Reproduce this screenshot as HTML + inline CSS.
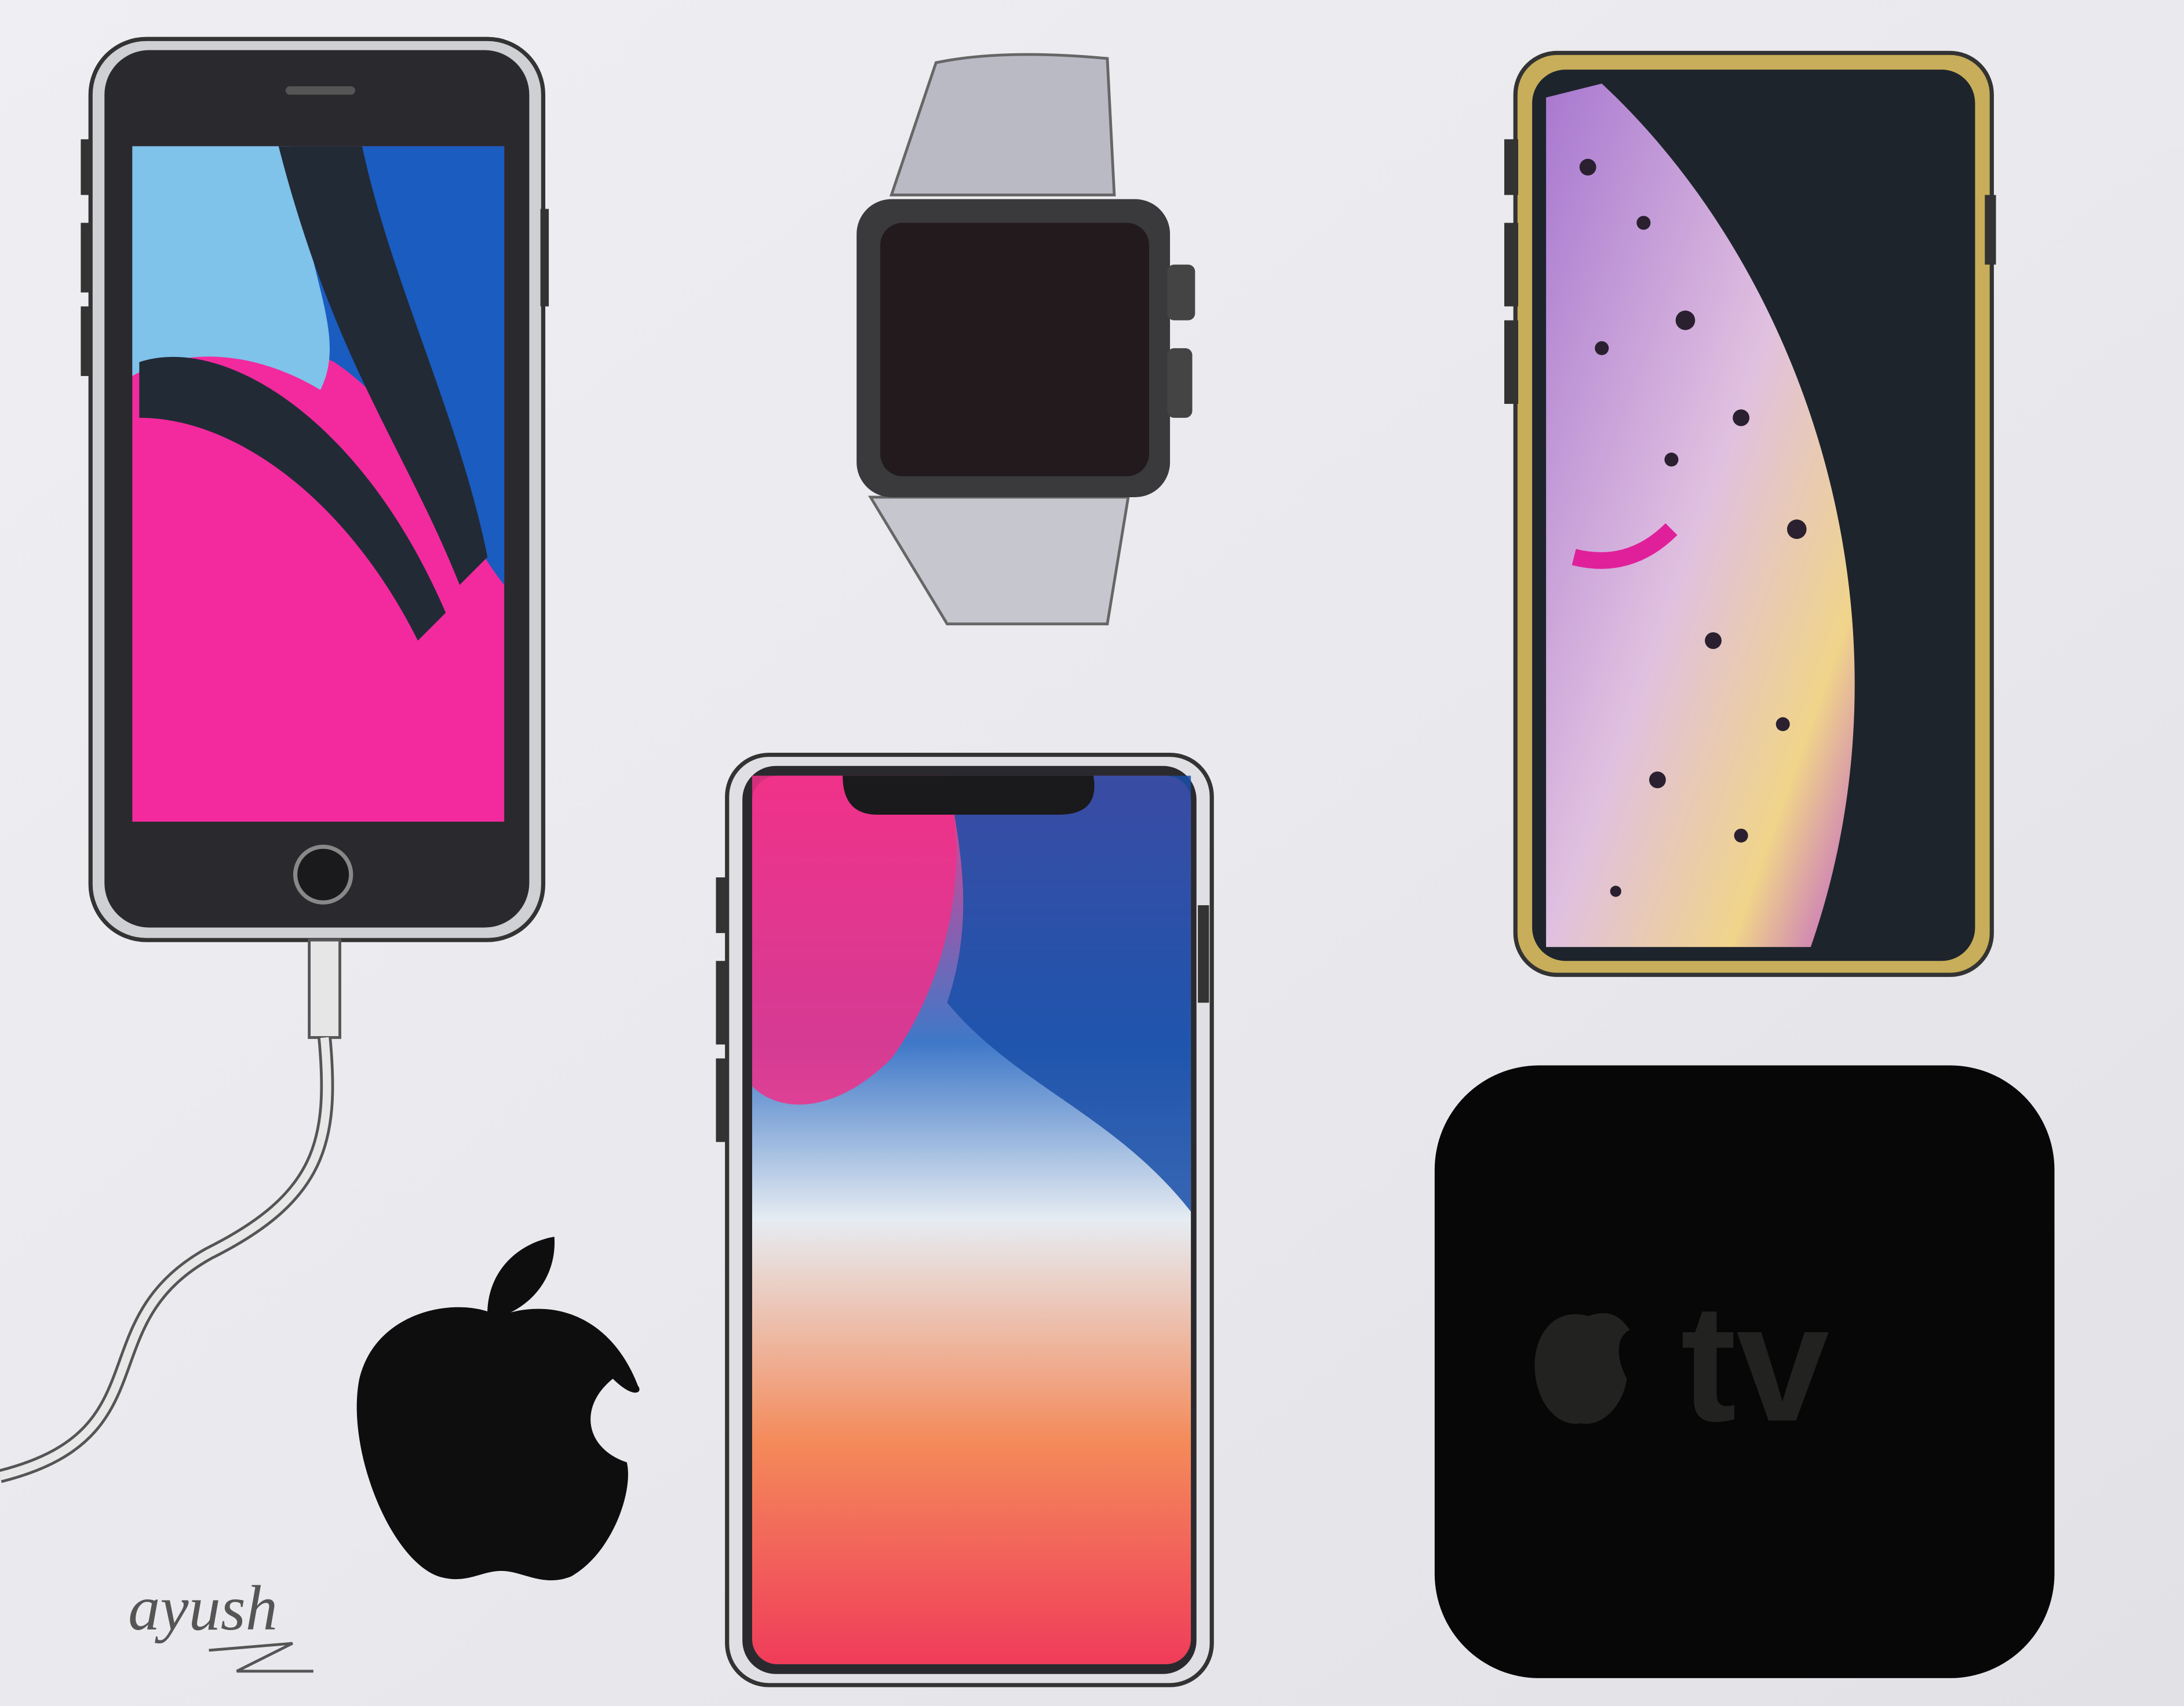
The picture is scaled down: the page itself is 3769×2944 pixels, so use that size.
<!DOCTYPE html>
<html><head><meta charset="utf-8"><style>
html,body{margin:0;padding:0;width:3769px;height:2944px;overflow:hidden;background:#ececf0}
svg{display:block}
</style></head><body>
<svg width="3769" height="2944" viewBox="0 0 1568 1225" preserveAspectRatio="none" xmlns="http://www.w3.org/2000/svg">
<defs>
<linearGradient id="bg" x1="0" y1="0" x2="1" y2="1"><stop offset="0" stop-color="#efeff3"/><stop offset="0.5" stop-color="#eaeaee"/><stop offset="1" stop-color="#e2e2e6"/></linearGradient>
<linearGradient id="s8" x1="0" y1="0" x2="1" y2="1"><stop offset="0" stop-color="#6fb7e6"/><stop offset="0.3" stop-color="#1e2a40"/><stop offset="0.42" stop-color="#1563c8"/><stop offset="0.5" stop-color="#ff2aa2"/><stop offset="1" stop-color="#f2309a"/></linearGradient>
<linearGradient id="sx" x1="0" y1="0" x2="0" y2="1"><stop offset="0" stop-color="#f03c8c"/><stop offset="0.3" stop-color="#3f78c8"/><stop offset="0.5" stop-color="#e6ecf2"/><stop offset="0.75" stop-color="#f48a5a"/><stop offset="1" stop-color="#f03c5a"/></linearGradient>
<linearGradient id="planet" x1="0" y1="0" x2="1" y2="1"><stop offset="0" stop-color="#a878d0"/><stop offset="0.5" stop-color="#e0c0e0"/><stop offset="0.8" stop-color="#f0d48a"/><stop offset="1" stop-color="#c060c8"/></linearGradient>
</defs>
<rect width="1568" height="1225" fill="url(#bg)"/>

<!-- left iPhone 8 -->
<rect x="65" y="28" width="325" height="647" rx="40" fill="#cfd0d4" stroke="#333" stroke-width="3"/>
<rect x="75" y="36" width="305" height="630" rx="32" fill="#2a2a2e"/>
<rect x="95" y="105" width="267" height="485" fill="#f22a9e"/>
<path d="M95 105 L362 105 L362 420 C330 380 300 300 240 260 C180 230 130 230 95 270Z" fill="#1a5cc0"/>
<path d="M95 105 L210 105 C220 200 250 240 230 280 C180 250 130 250 95 270Z" fill="#7fc2ea"/>
<path d="M100 260 C160 240 260 300 320 440 L300 460 C250 360 170 300 100 300Z" fill="#222a36"/>
<path d="M200 105 L260 105 C280 200 330 300 350 400 L330 420 C290 320 240 260 200 105Z" fill="#222a36"/>
<circle cx="232" cy="628" r="20" fill="#1a1a1c" stroke="#888" stroke-width="3"/>
<rect x="205" y="62" width="50" height="6" rx="3" fill="#555"/>
<rect x="58" y="100" width="8" height="40" fill="#333"/><rect x="58" y="160" width="8" height="50" fill="#333"/><rect x="58" y="220" width="8" height="50" fill="#333"/>
<rect x="388" y="150" width="6" height="70" fill="#333"/>

<!-- cable -->
<rect x="222" y="675" width="22" height="70" fill="#e6e6e6" stroke="#555" stroke-width="2"/>
<path d="M233 745 C240 820 230 860 150 900 C60 950 120 1030 0 1060" fill="none" stroke="#555" stroke-width="10"/>
<path d="M233 745 C240 820 230 860 150 900 C60 950 120 1030 0 1060" fill="none" stroke="#e8e8e8" stroke-width="6"/>

<!-- watch -->
<path d="M640 140 L672 45 Q720 35 795 42 L800 140Z" fill="#b9bac4" stroke="#666" stroke-width="2"/>
<path d="M625 357 L810 357 L795 448 L680 448Z" fill="#c6c7ce" stroke="#666" stroke-width="2"/>
<rect x="615" y="143" width="225" height="214" rx="25" fill="#3a3a3c"/>
<rect x="632" y="160" width="193" height="182" rx="16" fill="#221a1c"/>
<rect x="838" y="190" width="20" height="40" rx="5" fill="#444"/><rect x="838" y="250" width="18" height="50" rx="5" fill="#444"/>

<!-- right iPhone XS -->
<rect x="1088" y="38" width="342" height="662" rx="30" fill="#c8ae5a" stroke="#333" stroke-width="3"/>
<rect x="1100" y="50" width="318" height="640" rx="24" fill="#1e242c"/>
<path d="M1110 70 L1150 60 C1300 200 1380 450 1300 680 L1110 680Z" fill="url(#planet)"/>
<g fill="#2a2030">
<circle cx="1140" cy="120" r="6"/><circle cx="1180" cy="160" r="5"/><circle cx="1210" cy="230" r="7"/><circle cx="1150" cy="250" r="5"/><circle cx="1250" cy="300" r="6"/><circle cx="1200" cy="330" r="5"/><circle cx="1290" cy="380" r="7"/><circle cx="1170" cy="400" r="5"/><circle cx="1230" cy="460" r="6"/><circle cx="1280" cy="520" r="5"/><circle cx="1190" cy="560" r="6"/><circle cx="1250" cy="600" r="5"/><circle cx="1160" cy="640" r="4"/>
</g>
<path d="M1130 400 Q1170 410 1200 380" stroke="#e0209a" stroke-width="12" fill="none"/>
<rect x="1080" y="100" width="10" height="40" fill="#333"/><rect x="1080" y="160" width="10" height="60" fill="#333"/><rect x="1080" y="230" width="10" height="60" fill="#333"/>
<rect x="1425" y="140" width="8" height="50" fill="#333"/>

<!-- middle iPhone X -->
<rect x="522" y="542" width="348" height="668" rx="30" fill="#e0e0e4" stroke="#333" stroke-width="3"/>
<rect x="533" y="550" width="326" height="652" rx="24" fill="#2a2a2e"/>
<rect x="540" y="557" width="315" height="638" rx="18" fill="url(#sx)"/>
<path d="M680 557 L855 557 L855 870 C800 800 730 780 680 720 C700 660 690 610 680 557Z" fill="#1a4fa8" opacity="0.85"/>
<path d="M540 557 L680 557 C700 640 670 720 640 760 C600 800 560 800 540 780Z" fill="#f0308a" opacity="0.85"/>
<path d="M605 557 L785 557 Q790 585 760 585 L630 585 Q605 585 605 557Z" fill="#1a1a1c"/>
<rect x="514" y="630" width="8" height="40" fill="#333"/><rect x="514" y="690" width="8" height="60" fill="#333"/><rect x="514" y="760" width="8" height="60" fill="#333"/>
<rect x="860" y="650" width="8" height="70" fill="#333"/>

<!-- apple logo -->
<path d="M358 945 C330 930 270 940 258 990 C248 1040 280 1120 315 1132 C335 1138 345 1128 360 1128 C375 1128 390 1140 410 1132 C440 1115 455 1070 450 1050 C420 1040 415 1010 440 990 C455 1005 462 1000 458 995 C440 948 400 930 358 945Z" fill="#0e0e0e"/>
<path d="M350 948 C348 915 370 893 398 888 C400 918 380 942 350 948Z" fill="#0e0e0e"/>

<!-- apple tv -->
<rect x="1030" y="765" width="445" height="440" rx="75" fill="#070707"/>
<text x="1260" y="1020" font-family="Liberation Sans, sans-serif" font-size="120" font-weight="bold" fill="#222220" text-anchor="middle">tv</text>
<path d="M1140 945 C1115 938 1100 960 1102 985 C1104 1010 1120 1025 1135 1022 C1150 1025 1165 1010 1168 990 C1160 975 1160 960 1170 955 C1160 940 1150 942 1140 945Z" fill="#222220"/>

<!-- signature -->
<text x="92" y="1170" font-family="Liberation Serif, serif" font-style="italic" font-size="46" fill="#555">ayush</text>
<path d="M150 1185 L210 1180 L170 1200 L225 1200" stroke="#555" stroke-width="2" fill="none"/>
</svg>
</body></html>
